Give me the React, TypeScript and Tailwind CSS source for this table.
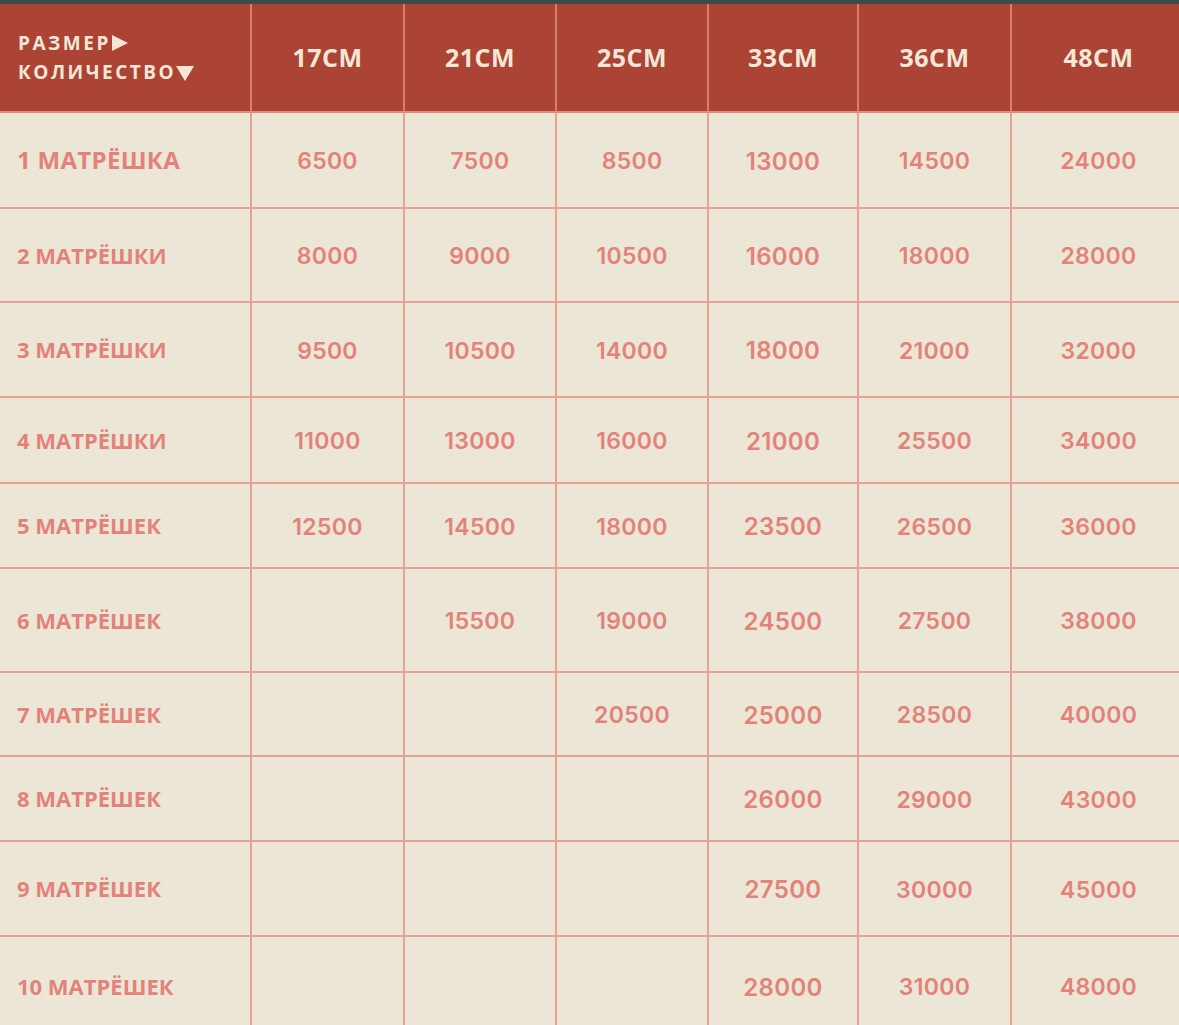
const sizes = ['17CM', '21CM', '25CM', '33CM', '36CM', '48CM']

const rows: { label: string; h: string; big?: boolean; prices: (number | null)[] }[] = [
  { label: '1 МАТРЁШКА', h: 'h-[96px]', big: true, prices: [6500, 7500, 8500, 13000, 14500, 24000] },
  { label: '2 МАТРЁШКИ', h: 'h-[94px]', prices: [8000, 9000, 10500, 16000, 18000, 28000] },
  { label: '3 МАТРЁШКИ', h: 'h-[95px]', prices: [9500, 10500, 14000, 18000, 21000, 32000] },
  { label: '4 МАТРЁШКИ', h: 'h-[86px]', prices: [11000, 13000, 16000, 21000, 25500, 34000] },
  { label: '5 МАТРЁШЕК', h: 'h-[85px]', prices: [12500, 14500, 18000, 23500, 26500, 36000] },
  { label: '6 МАТРЁШЕК', h: 'h-[104px]', prices: [null, 15500, 19000, 24500, 27500, 38000] },
  { label: '7 МАТРЁШЕК', h: 'h-[84px]', prices: [null, null, 20500, 25000, 28500, 40000] },
  { label: '8 МАТРЁШЕК', h: 'h-[85px]', prices: [null, null, null, 26000, 29000, 43000] },
  { label: '9 МАТРЁШЕК', h: 'h-[95px]', prices: [null, null, null, 27500, 30000, 45000] },
  { label: '10 МАТРЁШЕК', h: 'h-[100px]', prices: [null, null, null, 28000, 31000, 48000] },
]

const cols = 'grid grid-cols-[250px_153px_152px_152px_150px_153px_169px]'

export default function App() {
  return (
    <div
      className="w-[1179px] h-[1025px] overflow-hidden bg-[#ece6d6]"
      style={{ fontFamily: '"Open Sans", "DejaVu Sans", sans-serif' }}
    >
      <div className="h-[4px] bg-[#3b4b48]" />

      {/* шапка */}
      <div className={`${cols} h-[109px] bg-[#ab4434] border-b-2 border-[#df8a7c] text-[#f4e7d8] font-bold`}>
        <div className="flex flex-col justify-center pl-[18px] text-[19px] leading-[29px] tracking-[2.5px]">
          <span className="flex items-center">
            РАЗМЕР
            <svg width="18" height="16" viewBox="0 0 18 16">
              <path d="M1 0 L17 8 L1 16 Z" fill="#f4e7d8" />
            </svg>
          </span>
          <span className="flex items-center">
            КОЛИЧЕСТВО
            <svg width="18" height="15" viewBox="0 0 18 15" className="mt-[2px]">
              <path d="M0 0 L18 0 L9 15 Z" fill="#f4e7d8" />
            </svg>
          </span>
        </div>
        {sizes.map((s, i) => (
          <div
            key={s}
            className={`flex items-center justify-center border-l-2 border-[#d67e6c] text-[25px] tracking-[0.5px] ${i === 5 ? 'pl-[6px]' : ''}`}
          >
            {s}
          </div>
        ))}
      </div>

      {/* строки */}
      {rows.map(r => (
        <div key={r.label} className={`${cols} ${r.h} border-b-2 border-[#e7a093] text-[#e2827a]`}>
          <div className={`flex items-center pl-[17px] font-bold ${r.big ? 'text-[24px] tracking-[0.3px]' : 'text-[22px]'}`}>
            {r.label}
          </div>
          {r.prices.map((p, i) => (
            <div
              key={i}
              className={`flex items-center justify-center pt-[3px] border-l-2 border-[#e7a093] font-[Inter,sans-serif] font-semibold tracking-[0.3px] ${i === 3 ? 'text-[24px]' : 'text-[23px]'} ${i === 5 ? 'pl-[6px]' : ''}`}
            >
              {p ?? ''}
            </div>
          ))}
        </div>
      ))}
    </div>
  )
}
